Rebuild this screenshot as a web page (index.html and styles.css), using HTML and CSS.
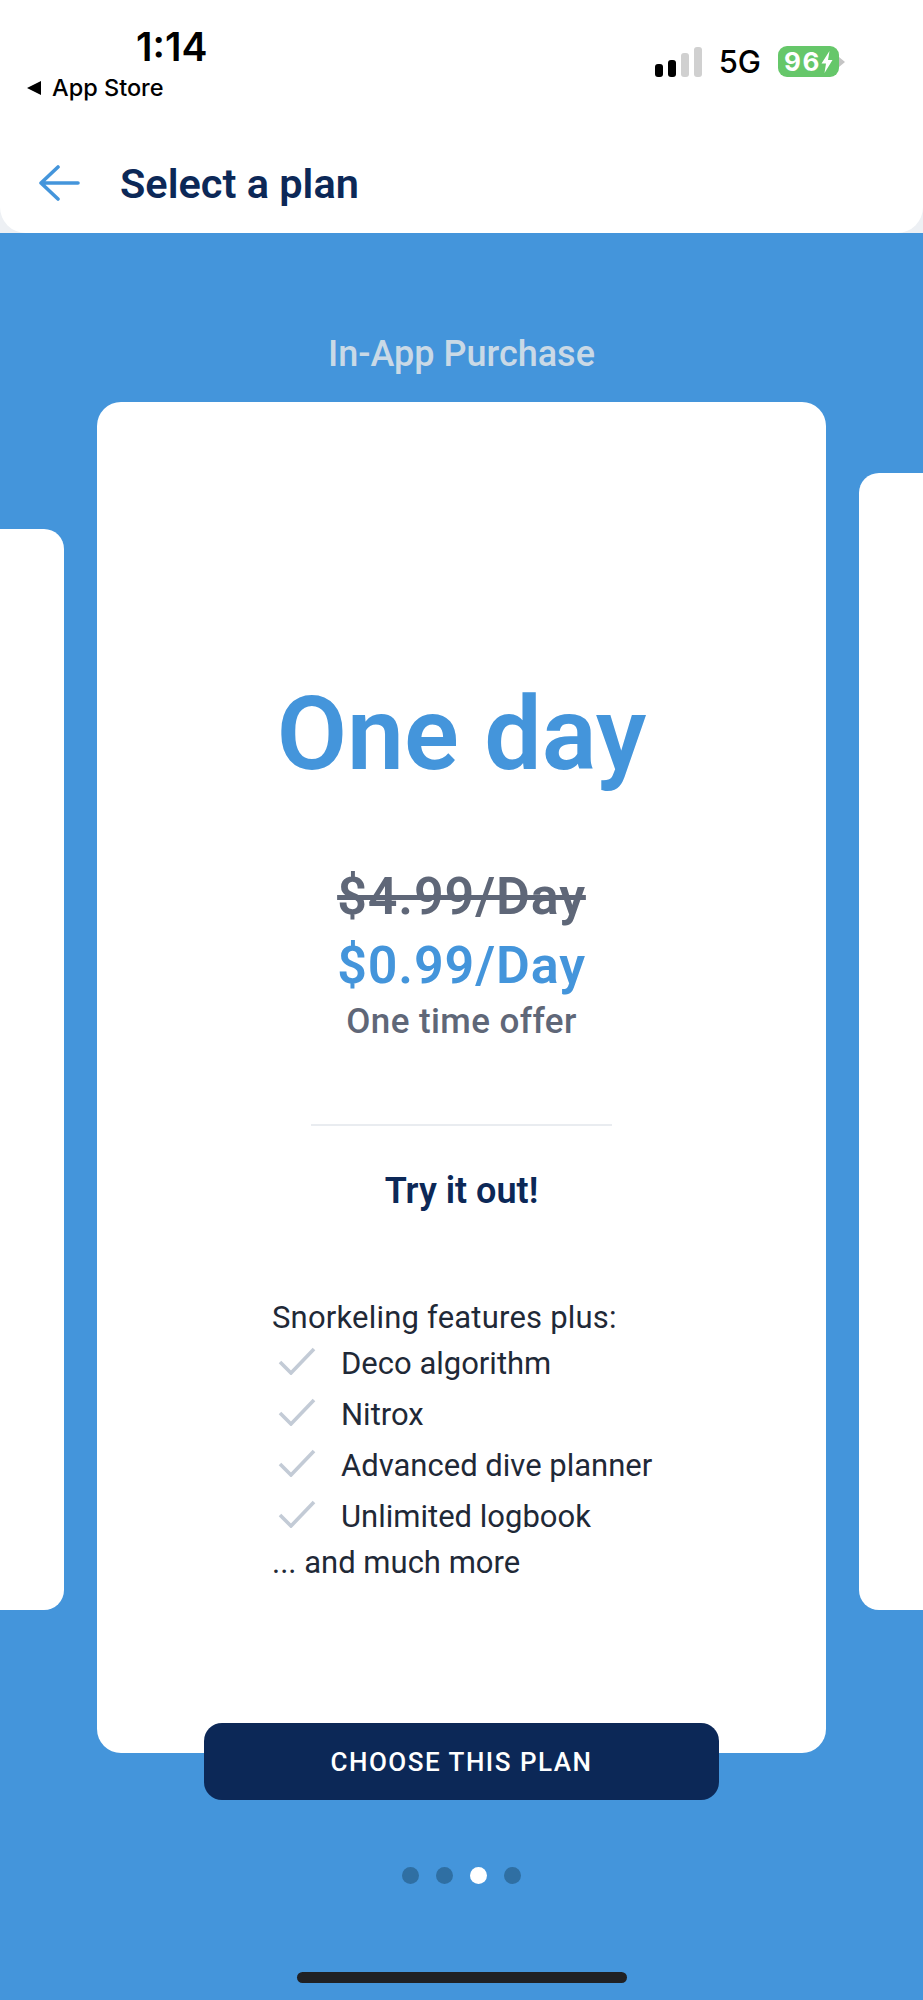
FILE: index.html
```html
<!DOCTYPE html>
<html lang="en">
<head>
    <meta charset="UTF-8">
    <meta name="viewport" content="width=device-width, initial-scale=1.0">
    <title>Select a plan</title>
    <link rel="stylesheet" href="styles.css">
</head>
<body>
    <div class="top-wrap">
        <div class="top">
            <div class="status">
                <div class="status-left">
                    <div class="time">1:14</div>
                    <div class="back-app"><span class="back-tri"></span>App Store</div>
                </div>
                <div class="status-right">
                    <div class="signal">
                        <span class="bar b1"></span>
                        <span class="bar b2"></span>
                        <span class="bar b3"></span>
                        <span class="bar b4"></span>
                    </div>
                    <div class="net">5G</div>
                    <div class="battery">
                        <div class="battery-body">96<svg class="bolt" width="12" height="22" viewBox="0 0 12 22"><path d="M8.5 0 L0.5 12.5 H5 L3.5 22 L11.5 9 H7 Z" fill="#fff"/></svg></div>
                        <span class="battery-nub"></span>
                    </div>
                </div>
            </div>
            <div class="nav">
                <svg class="back-arrow" width="42" height="36" viewBox="0 0 42 36">
                    <path d="M40 18 H3 M20 2 L3 18 L20 34" fill="none" stroke="#4495DB" stroke-width="3.6" stroke-linecap="round" stroke-linejoin="round"/>
                </svg>
                <h1 class="title">Select a plan</h1>
            </div>
        </div>
    </div>

    <div class="kicker">In-App Purchase</div>

    <div class="carousel">
        <div class="peek peek-left"></div>
        <div class="card">
            <div class="plan-name">One day</div>
            <div class="price-old">$4.99/Day</div>
            <div class="price-new">$0.99/Day</div>
            <div class="offer">One time offer</div>
            <div class="sep"></div>
            <div class="tagline">Try it out!</div>
            <div class="features">
                <div class="feat-line">Snorkeling features plus:</div>
                <ul class="feat-list">
                    <li><svg class="check" width="38" height="28" viewBox="0 0 38 28"><path d="M2 15 L13 26 L36 2" fill="none" stroke="#C3CBD6" stroke-width="3.6"/></svg>Deco algorithm</li>
                    <li><svg class="check" width="38" height="28" viewBox="0 0 38 28"><path d="M2 15 L13 26 L36 2" fill="none" stroke="#C3CBD6" stroke-width="3.6"/></svg>Nitrox</li>
                    <li><svg class="check" width="38" height="28" viewBox="0 0 38 28"><path d="M2 15 L13 26 L36 2" fill="none" stroke="#C3CBD6" stroke-width="3.6"/></svg>Advanced dive planner</li>
                    <li><svg class="check" width="38" height="28" viewBox="0 0 38 28"><path d="M2 15 L13 26 L36 2" fill="none" stroke="#C3CBD6" stroke-width="3.6"/></svg>Unlimited logbook</li>
                </ul>
                <div class="feat-line feat-more">... and much more</div>
            </div>
        </div>
        <div class="peek peek-right"></div>
    </div>

    <button class="choose">CHOOSE THIS PLAN</button>

    <div class="dots">
        <span class="dot"></span>
        <span class="dot"></span>
        <span class="dot active"></span>
        <span class="dot"></span>
    </div>

    <div class="home-bar"></div>
</body>
</html>
```
FILE: styles.css
```css
html, body {
    margin: 0;
    padding: 0;
}
body {
    width: 923px;
    height: 2000px;
    overflow: hidden;
    background: #4495DB;
    font-family: "Roboto", sans-serif;
    -webkit-font-smoothing: antialiased;
}
.top-wrap {
    background: #EDF0F4;
}
.top {
    height: 233px;
    background: #fff;
    border-radius: 0 0 26px 26px;
}
.status {
    display: flex;
    justify-content: space-between;
    height: 138px;
}
.status-left {
    padding: 26px 0 0 27px;
}
.time {
    font-family: "Inter", sans-serif;
    font-weight: 600;
    font-size: 39px;
    line-height: 42px;
    color: #000;
    margin-left: 109px;
}
.back-app {
    display: flex;
    align-items: center;
    font-family: "Inter", sans-serif;
    font-weight: 500;
    font-size: 23.5px;
    line-height: 28px;
    color: #000;
    margin-top: 6px;
}
.back-tri {
    width: 0;
    height: 0;
    border-top: 7px solid transparent;
    border-bottom: 7px solid transparent;
    border-right: 14px solid #000;
    margin-right: 11px;
}
.status-right {
    display: flex;
    align-items: flex-end;
    padding: 46px 78px 0 0;
    height: 31px;
}
.signal {
    display: flex;
    align-items: flex-end;
    gap: 5px;
    height: 31px;
    margin-right: 17px;
}
.bar {
    width: 8px;
    border-radius: 3px;
    background: #d0d0d0;
}
.b1 { height: 13px; background: #000; }
.b2 { height: 17px; background: #000; }
.b3 { height: 24px; }
.b4 { height: 30px; }
.net {
    font-family: "Inter", sans-serif;
    font-weight: 500;
    font-size: 31px;
    line-height: 31px;
    color: #000;
    margin-right: 17px;
    height: 31px;
}
.battery {
    display: flex;
    align-items: center;
}
.battery-body {
    display: flex;
    align-items: center;
    justify-content: center;
    width: 61px;
    height: 31px;
    border-radius: 9px;
    background: #66C76A;
    color: #fff;
    font-family: "Inter", sans-serif;
    font-weight: 700;
    font-size: 26px;
    letter-spacing: 1.5px;
}
.battery-nub {
    width: 0;
    height: 0;
    border-top: 5px solid transparent;
    border-bottom: 5px solid transparent;
    border-left: 6px solid #c4c4c4;
}
.nav {
    display: flex;
    align-items: center;
    height: 90px;
    padding-left: 38px;
}
.back-arrow {
    margin-right: 40px;
}
.title {
    margin: 0;
    font-family: "Roboto", sans-serif;
    font-weight: 600;
    font-size: 41.5px;
    color: #0C2857;
}
.kicker {
    margin-top: 100px;
    text-align: center;
    font-weight: 500;
    font-size: 36px;
    line-height: 42px;
    color: #C9D9E6;
}
.carousel {
    display: flex;
    align-items: flex-start;
    justify-content: space-between;
    margin-top: 27px;
    height: 1351px;
}
.peek {
    width: 64px;
    background: #fff;
}
.peek-left {
    height: 1081px;
    margin-top: 127px;
    border-radius: 0 20px 20px 0;
}
.peek-right {
    height: 1137px;
    margin-top: 71px;
    border-radius: 20px 0 0 20px;
}
.card {
    width: 729px;
    height: 1351px;
    box-sizing: border-box;
    background: #fff;
    border-radius: 24px;
    padding-top: 277px;
    text-align: center;
}
.plan-name {
    font-weight: 600;
    font-size: 102px;
    line-height: 110px;
    color: #4495DB;
}
.price-old {
    margin-top: 78px;
    font-weight: 600;
    font-size: 52px;
    letter-spacing: 0.9px;
    line-height: 60px;
    color: #5F6778;
    text-decoration: line-through;
}
.price-new {
    margin-top: 9px;
    font-weight: 600;
    font-size: 52px;
    letter-spacing: 0.9px;
    line-height: 60px;
    color: #4495DB;
}
.offer {
    margin-top: 4px;
    font-weight: 500;
    font-size: 35px;
    letter-spacing: 0.4px;
    line-height: 44px;
    color: #5F6778;
}
.sep {
    width: 301px;
    height: 2px;
    margin: 80px auto 0;
    background: #E9ECF0;
}
.tagline {
    margin-top: 45px;
    font-weight: 600;
    font-size: 36px;
    line-height: 40px;
    color: #0C2857;
}
.features {
    margin-top: 84px;
    padding-left: 175px;
    text-align: left;
    font-size: 31px;
    color: #1F2937;
}
.feat-line {
    line-height: 46px;
    letter-spacing: 0.2px;
}
.feat-more {
    letter-spacing: 0;
}
.feat-list {
    list-style: none;
    margin: -3px 0 -2px;
    padding: 0;
}
.feat-list li {
    display: flex;
    align-items: center;
    height: 51px;
    line-height: 51px;
}
.check {
    margin: 0 25px 6px 6px;
}
.choose {
    display: block;
    width: 515px;
    height: 77px;
    margin: -30px auto 0;
    position: relative;
    border: 0;
    border-radius: 18px;
    background: #0C2857;
    color: #fff;
    font-family: "Roboto", sans-serif;
    font-weight: 500;
    font-size: 26px;
    letter-spacing: 1.5px;
}
.dots {
    display: flex;
    justify-content: center;
    gap: 17px;
    margin-top: 67px;
}
.dot {
    width: 17px;
    height: 17px;
    border-radius: 50%;
    background: #2F6FA3;
}
.dot.active {
    background: #fff;
}
.home-bar {
    width: 330px;
    height: 11px;
    margin: 88px auto 0;
    border-radius: 6px;
    background: #202124;
}
```
